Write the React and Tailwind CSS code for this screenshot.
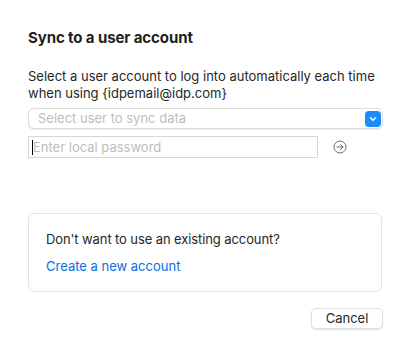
import React, { useState } from 'react';

const font = { fontFamily: 'Inter, "Noto Sans", sans-serif' };

const App = () => {
  const [password, setPassword] = useState('');

  return (
    <div className="w-[411px] h-[356px] bg-white text-[#262626] flex flex-col px-7" style={font}>
      <h2 className="mt-[29px] text-[15px] leading-[18px] font-bold text-[#1f1f1f] tracking-[-0.1px]">Sync to a user account</h2>

      <p className="mt-[21px] text-[13px] leading-[17px] text-[#262626]">
        {'Select a user account to log into automatically each time when using {idpemail@idp.com}'}
      </p>

      <div className="mt-[6px] h-[21px] w-[355px] flex items-center justify-between rounded-[6px] border border-[#dcdcdc] bg-white pl-[9px] pr-[1px] shadow-[0_0.5px_1px_rgba(0,0,0,0.08)]">
        <span className="text-[13px] text-[#bdbdbd]">Select user to sync data</span>
        <span className="w-4 h-4 rounded-[4px] bg-[#1a8cff] flex items-center justify-center">
          <svg width="8" height="6" viewBox="0 0 8 6" fill="none">
            <path d="M1.5 1.8 L4 4.3 L6.5 1.8" stroke="white" strokeWidth="1.5" strokeLinecap="round" strokeLinejoin="round" />
          </svg>
        </span>
      </div>

      <div className="mt-[7px] flex items-center">
        <div className="relative">
          <input
            type="password"
            value={password}
            onChange={e => setPassword(e.target.value)}
            placeholder="Enter local password"
            className="block w-[290px] h-[22px] border border-[#d6d6d6] bg-white px-1 text-[13px] placeholder:text-[#bdbdbd] outline-none caret-black"
            style={font}
          />
          {password === '' && <span className="absolute left-[4px] top-[4px] w-px h-[15px] bg-black" />}
        </div>
        <svg className="ml-[15px]" width="14" height="14" viewBox="0 0 14 14" fill="none">
          <circle cx="7" cy="7" r="6" stroke="#6b6b6b" strokeWidth="1" />
          <path d="M4 7 H10 M7.6 4.6 L10 7 L7.6 9.4" stroke="#6b6b6b" strokeWidth="1" strokeLinecap="round" strokeLinejoin="round" />
        </svg>
      </div>

      <div className="mt-[55px] w-[354px] h-[79px] rounded-[6px] border border-[#e3e3e3] bg-white px-[17px] pt-[17px]">
        <p className="text-[13px] leading-[17px] text-[#262626] tracking-[-0.1px]">Don't want to use an existing account?</p>
        <a href="#" className="block mt-[10px] text-[13px] leading-[17px] text-[#0a6fdb]">Create a new account</a>
      </div>

      <div className="mt-[16px] flex justify-end">
        <button className="w-[72px] h-[21px] rounded-[5px] bg-white text-[13px] text-[#262626] border border-[#e0e0e0] shadow-[0_1px_1.5px_rgba(0,0,0,0.12)]" style={font}>
          Cancel
        </button>
      </div>
    </div>
  );
};

export default App;
